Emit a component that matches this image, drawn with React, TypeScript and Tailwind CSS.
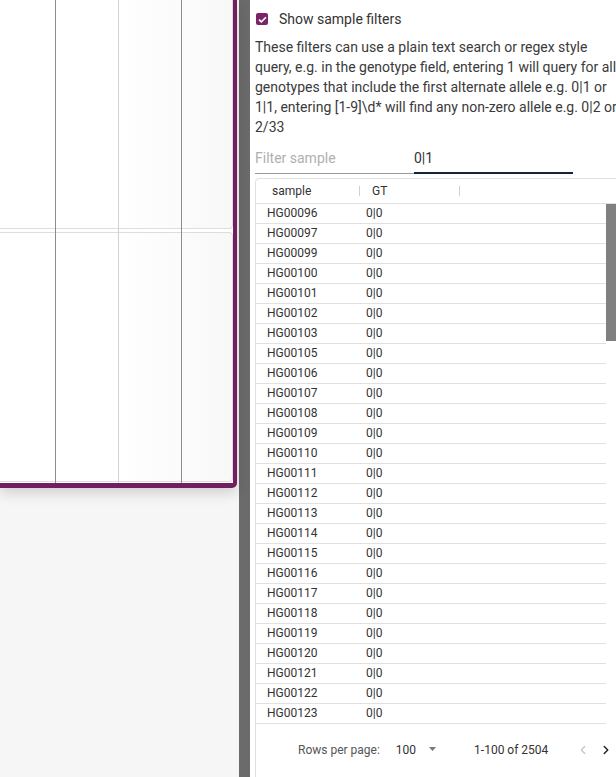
import { ChevronLeft, ChevronRight } from 'lucide-react';

const samples = [
  'HG00096', 'HG00097', 'HG00099', 'HG00100', 'HG00101', 'HG00102', 'HG00103',
  'HG00105', 'HG00106', 'HG00107', 'HG00108', 'HG00109', 'HG00110', 'HG00111',
  'HG00112', 'HG00113', 'HG00114', 'HG00115', 'HG00116', 'HG00117', 'HG00118',
  'HG00119', 'HG00120', 'HG00121', 'HG00122', 'HG00123',
];

function TrackView() {
  return (
    <div className="w-[239px] shrink-0 bg-[#f6f6f6]">
      <div className="relative w-[237px] h-[488px] bg-white border-r-4 border-b-[5px] border-[#701f60] rounded-br-[5px] shadow-[0_5px_14px_rgba(0,0,0,0.16)]">
        {/* two stacked sub-panels */}
        <div className="h-[229px] border-r border-b border-[#dddddd] rounded-br-[4px] bg-gradient-to-r from-white via-white to-[#f8f8f8]" />
        <div className="mt-[3px] h-[250px] border-r border-t border-b border-[#dddddd] rounded-r-[4px] bg-gradient-to-r from-white via-white to-[#f8f8f8]" />
        {/* grid lines */}
        <div className="absolute top-0 left-[55px] w-px h-[483px] bg-[#8c8c8c]" />
        <div className="absolute top-0 left-[118px] w-px h-[483px] bg-[#d2d2d2]" />
        <div className="absolute top-0 left-[181px] w-px h-[483px] bg-[#8c8c8c]" />
      </div>
    </div>
  );
}

function SampleTable() {
  return (
    <div className="mt-[4px] w-[370px] border border-[#e0e0e0] rounded-tl-[4px] text-[12px] text-[#333]">
      <div className="flex items-center h-[25px] border-b border-[#e0e0e0]">
        <div className="w-[103px] pl-[16px]">sample</div>
        <div className="w-[100px] flex items-center">
          <span className="w-px h-[10px] bg-[#d0d0d0]" />
          <span className="pl-[12px]">GT</span>
        </div>
        <span className="w-px h-[10px] bg-[#d0d0d0]" />
      </div>
      <div className="flex">
        <div className="w-[350px]">
          {samples.map((s) => (
            <div key={s} className="flex items-center h-[20px] pb-px border-b border-[#e0e0e0]">
              <div className="w-[110px] pl-[11px]">{s}</div>
              <div>0|0</div>
            </div>
          ))}
        </div>
        <div className="w-[10px] h-[520px]">
          <div className="h-[137px] bg-[#808080]" />
        </div>
      </div>
      <div className="flex items-center h-[53px] pb-[2px] text-[#555]">
        <span className="ml-[42px]">Rows per page:</span>
        <span className="ml-[16px] text-[#333]">100</span>
        <svg className="ml-[13px] mb-[2px]" width="7" height="4" viewBox="0 0 7 4">
          <path d="M0 0h7L3.5 4z" fill="#777" />
        </svg>
        <span className="ml-[38px] text-[#333]">1-100 of 2504</span>
        <ChevronLeft className="ml-[28px] text-[#c4c4c4]" size={14} strokeWidth={2} />
        <ChevronRight className="ml-[9px] text-[#222]" size={14} strokeWidth={2.5} />
      </div>
    </div>
  );
}

export default function App() {
  return (
    <div className="flex w-[616px] h-[777px] overflow-hidden bg-white font-['Roboto',sans-serif]">
      <TrackView />
      <div className="w-[11px] shrink-0 bg-[#6b6b6b]" />
      <div className="w-[366px] shrink-0 pl-[5px] bg-white">
        <label className="flex items-center mt-[12px] h-[14px] text-[14px] text-[#333]">
          <span className="ml-[1px] w-[12px] h-[12px] rounded-[2px] bg-[#7b2468] flex items-center justify-center">
            <svg width="9" height="7" viewBox="0 0 9 7">
              <path d="M1 3.6l2.3 2.2L8 1.2" fill="none" stroke="white" strokeWidth="1.6" />
            </svg>
          </span>
          <span className="ml-[11px]">Show sample filters</span>
        </label>
        <p className="mt-[11px] w-[366px] text-[14px] leading-[20px] text-[#3a3a3a]">
          These filters can use a plain text search or regex style query, e.g. in the genotype field, entering 1 will query for all genotypes that include the first alternate allele e.g. 0|1 or 1|1, entering [1-9]\d* will find any non-zero allele e.g. 0|2 or 2/33
        </p>
        <div className="flex mt-[11px] text-[14px]">
          <div className="w-[159px] h-[26px] border-b border-[#9a9a9a] text-[#b0b0b0]">Filter sample</div>
          <div className="w-[159px] h-[26px] border-b-2 border-[#13233a] text-[#333]">0|1</div>
        </div>
        <SampleTable />
      </div>
    </div>
  );
}
